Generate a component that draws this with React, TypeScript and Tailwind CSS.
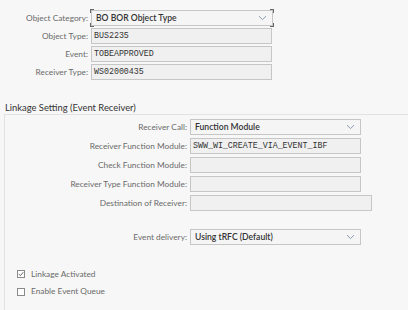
import React from "react";

const sans = { fontFamily: 'Lato, "Liberation Sans", Arial, sans-serif' };

const Chevron = () => (
  <svg width="9" height="6" viewBox="0 0 9 6" className="shrink-0">
    <path d="M1 1.2 L4.5 4.6 L8 1.2" fill="none" stroke="#8a9bb0" strokeWidth="1" />
  </svg>
);

const Select = ({ value, width, focused }: { value: string; width: string; focused?: boolean }) => (
  <div className={`relative h-[16px] ${width} flex items-center justify-between pl-[4px] pr-[5px] border border-[#c6c6c6] bg-[#f5f5f5]`}>
    <span className="text-[8.6px] font-semibold text-[#333]">{value}</span>
    <Chevron />
    {focused && (
      <>
        <span className="absolute -left-[2px] -top-[2px] w-[4px] h-[4px] border-l border-t border-[#666]" />
        <span className="absolute -right-[2px] -top-[2px] w-[4px] h-[4px] border-r border-t border-[#666]" />
        <span className="absolute -left-[2px] -bottom-[2px] w-[4px] h-[4px] border-l border-b border-[#666]" />
        <span className="absolute -right-[2px] -bottom-[2px] w-[4px] h-[4px] border-r border-b border-[#666]" />
      </>
    )}
  </div>
);

const Field = ({ value, width }: { value?: string; width: string }) => (
  <div className={`h-[16px] ${width} flex items-center pl-[2px] border border-[#c6c6c6] bg-[#f0f0f0]`}>
    <span className="text-[8.3px] text-[#333]" style={{ fontFamily: '"Liberation Mono", "DejaVu Sans Mono", monospace' }}>
      {value}
    </span>
  </div>
);

const Label = ({ children, width }: { children: React.ReactNode; width: string }) => (
  <div className={`${width} shrink-0 text-right text-[8.3px] text-[#6a6a6a] pr-[3px]`}>{children}</div>
);

const Row = ({ label, labelWidth, children }: { label: string; labelWidth: string; children: React.ReactNode }) => (
  <div className="flex items-center">
    <Label width={labelWidth}>{label}:</Label>
    {children}
  </div>
);

const Check = ({ checked, label }: { checked?: boolean; label: string }) => (
  <div className="flex items-center gap-[6px]">
    <div className="w-[8px] h-[8px] border border-[#8a8a8a] bg-white flex items-center justify-center">
      {checked && (
        <svg width="6" height="6" viewBox="0 0 6 6">
          <path d="M0.8 3.1 L2.4 4.6 L5.3 1.2" fill="none" stroke="#555" strokeWidth="0.9" />
        </svg>
      )}
    </div>
    <span className="text-[8.3px] text-[#6a6a6a]">{label}</span>
  </div>
);

export default function App() {
  return (
    <div className="w-[408px] h-[310px] bg-[#f7f7f7] overflow-hidden" style={sans}>
      <div className="pt-[10px] flex flex-col gap-[2px]">
        <Row label="Object Category" labelWidth="w-[91px]">
          <Select value="BO BOR Object Type" width="w-[182px]" focused />
        </Row>
        <Row label="Object Type" labelWidth="w-[91px]">
          <Field value="BUS2235" width="w-[181px]" />
        </Row>
        <Row label="Event" labelWidth="w-[91px]">
          <Field value="TOBEAPPROVED" width="w-[181px]" />
        </Row>
        <Row label="Receiver Type" labelWidth="w-[91px]">
          <Field value="WS02000435" width="w-[181px]" />
        </Row>
      </div>

      <div className="mt-[21px] pl-[5px] text-[9.4px] text-[#333] leading-[13px]">Linkage Setting (Event Receiver)</div>

      <div className="ml-[4px] border-l border-t border-[#e2e2e2] h-[200px] pt-[4px]">
        <div className="flex flex-col gap-[3px]">
          <Row label="Receiver Call" labelWidth="w-[185px]">
            <Select value="Function Module" width="w-[171px]" />
          </Row>
          <Row label="Receiver Function Module" labelWidth="w-[185px]">
            <Field value="SWW_WI_CREATE_VIA_EVENT_IBF" width="w-[171px]" />
          </Row>
          <Row label="Check Function Module" labelWidth="w-[185px]">
            <Field width="w-[171px]" />
          </Row>
          <Row label="Receiver Type Function Module" labelWidth="w-[185px]">
            <Field width="w-[171px]" />
          </Row>
          <Row label="Destination of Receiver" labelWidth="w-[185px]">
            <Field width="w-[182px]" />
          </Row>
        </div>
        <div className="mt-[18px]">
          <Row label="Event delivery" labelWidth="w-[185px]">
            <Select value="Using tRFC (Default)" width="w-[171px]" />
          </Row>
        </div>
        <div className="mt-[23px] pl-[12px] flex flex-col gap-[5px]">
          <Check checked label="Linkage Activated" />
          <Check label="Enable Event Queue" />
        </div>
      </div>
    </div>
  );
}
